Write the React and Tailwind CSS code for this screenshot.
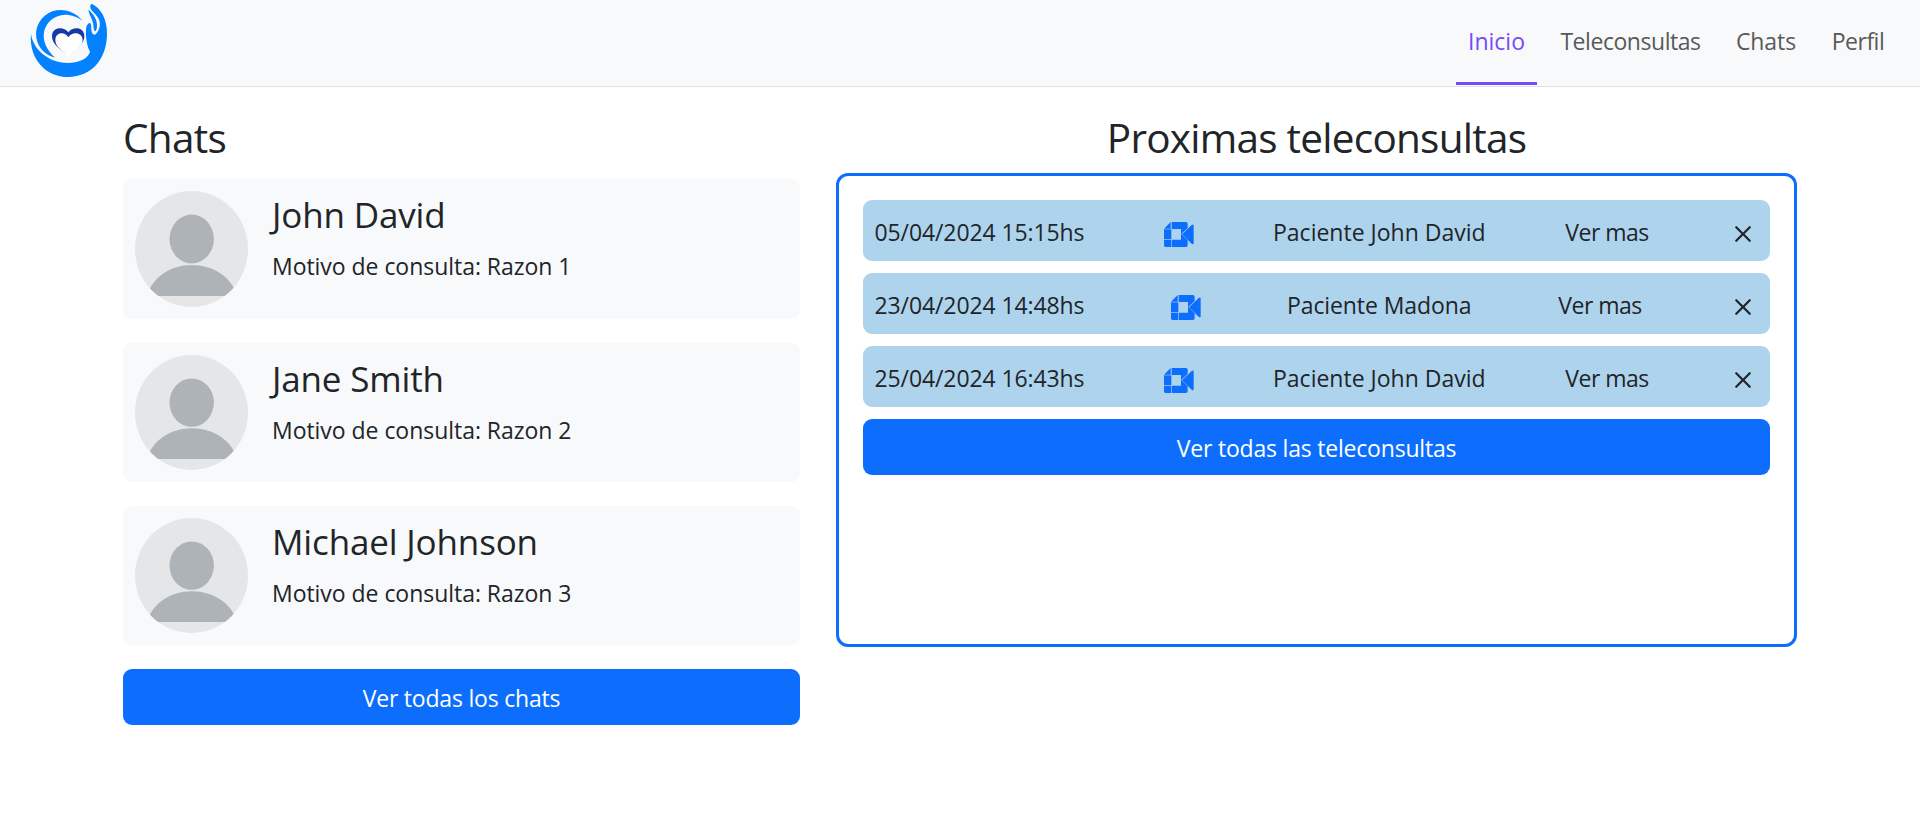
const NAV = [
  { label: 'Inicio', active: true, size: 'w-[81px]' },
  { label: 'Teleconsultas', size: 'w-[163px] tracking-[-0.45px]' },
  { label: 'Chats', size: 'w-[84px] tracking-[-0.1px]' },
  { label: 'Perfil', size: 'w-[76px] tracking-[-0.5px]' },
]

const CHATS = [
  { name: 'John David', reason: 'Razon 1', size: 'h-[140px]' },
  { name: 'Jane Smith', reason: 'Razon 2', size: 'h-[139px]' },
  { name: 'Michael Johnson', reason: 'Razon 3', size: 'h-[139px]' },
]

const CALLS = [
  { date: '05/04/2024 15:15hs', patient: 'John David', size: 'w-[213px]' },
  { date: '23/04/2024 14:48hs', patient: 'Madona', size: 'w-[185px] tracking-[-0.1px]' },
  { date: '25/04/2024 16:43hs', patient: 'John David', size: 'w-[213px]' },
]

function Logo() {
  return (
    <svg viewBox="0 0 300 240" className="h-20 w-[100px]">
      <g fill="#0381ff">
        <path d="M187 62C168 36 130 22 97 34C62 47 44 82 49 113C54 145 77 165 105 173C82 152 67 124 72 96C78 66 104 45 135 44C156 44 173 51 187 62Z" />
        <path d="M215 11C243 24 262 58 261 103C260 178 214 231 145 231C79 231 26 178 33 101C38 146 84 188 143 189C176 188 204 177 210 155C201 140 197 113 198 91C198 79 203 69 210 69C215 71 213 85 215 95C217 102 222 105 227 103C238 92 242 76 238 61C233 47 222 40 214 30C209 22 210 14 215 11Z" />
        <path d="M205 29C221 41 232 60 231 78C231 86 229 91 226 94C219 91 222 80 219 69C216 54 208 46 205 29Z" />
      </g>
      <path fill="#163aa4" d="M145 166C122 149 95 132 96 108C96 82 130 77 145 97C160 77 193 82 193 108C194 132 168 149 145 166Z" />
      <path fill="#fff" d="M145 170C128 151 106 141 106 120C106 96 134 93 145 112C156 93 188 96 188 120C188 141 162 151 145 170Z" />
    </svg>
  )
}

function Avatar() {
  return (
    <div className="w-[113px] shrink-0 overflow-hidden rounded-[50%] bg-[#e4e6e8]">
      <svg viewBox="0 0 113 116" preserveAspectRatio="none" className="h-full w-full">
        <ellipse cx="56.7" cy="48" rx="22.2" ry="24.4" fill="#adb3b7" />
        <path fill="#adb3b7" d="M12 105C17 86 36 74 56.7 74C78 74 97 86 102 105Z" />
      </svg>
    </div>
  )
}

function MeetIcon() {
  return (
    <svg viewBox="0 0 90 75" className="mt-[10px] h-[25px] w-[30px] shrink-0" fill="#0d6efd">
      <path d="M0 20L20 0V20Z" />
      <path d="M0 22H22V52H0Z" />
      <path d="M0 54H21V75H5Q0 75 0 70Z" />
      <path d="M23 0H66Q71 0 71 5V18L52 36L71 55V70Q71 75 66 75H23V53H51V21H23Z" />
      <path d="M54 37L83 9Q89 5 89 12V63Q89 70 83 65Z" />
    </svg>
  )
}

function CloseIcon() {
  return (
    <svg viewBox="0 0 16 16" className="-mr-[2px] -ml-[4px] mt-1 h-9 w-9 shrink-0" fill="#212529">
      <path d="M4.646 4.646a.5.5 0 0 1 .708 0L8 7.293l2.646-2.647a.5.5 0 0 1 .708.708L8.707 8l2.647 2.646a.5.5 0 0 1-.708.708L8 8.707l-2.646 2.647a.5.5 0 0 1-.708-.708L7.293 8 4.646 5.354a.5.5 0 0 1 0-.708" />
    </svg>
  )
}

export default function App() {
  return (
    <div className="min-h-[834px] bg-white font-['Open_Sans','Noto_Sans',sans-serif] text-[23px] leading-9 text-[#212529]">
      <header className="flex h-[87px] items-start justify-between border-b border-[#dee2e6] bg-[#f8f9fb] pr-6 pl-5">
        <Logo />
        <nav className="flex gap-3">
          {NAV.map((n) => (
            <a
              key={n.label}
              className={`h-[85px] border-b-3 pt-[23px] text-center whitespace-nowrap ${n.size} ${
                n.active ? 'border-[#794af9] text-[#794af9]' : 'border-transparent text-[#595959]'
              }`}
            >
              {n.label}
            </a>
          ))}
        </nav>
      </header>

      <main className="flex gap-9 px-[123px] pt-6">
        <section className="w-[677px]">
          <h1 className="h-[50px] text-[40.5px] leading-[54px] tracking-[-0.7px]">Chats</h1>
          <div className="mt-[18px] flex flex-col gap-6">
            {CHATS.map((c) => (
              <article key={c.name} className={`flex gap-6 rounded-[9px] bg-[#f8f9fb] p-3 ${c.size}`}>
                <Avatar />
                <div className="pt-[2px]">
                  <h2 className="text-[35px] leading-[43px] tracking-[-0.15px]">{c.name}</h2>
                  <p className="mt-3 tracking-[-0.04px]">Motivo de consulta: {c.reason}</p>
                </div>
              </article>
            ))}
            <button className="h-14 rounded-[9px] bg-[#0d6efd] pt-[2px] tracking-[-0.2px] text-white">
              Ver todas los chats
            </button>
          </div>
        </section>

        <section className="w-[961px]">
          <h1 className="h-[50px] text-center text-[40.5px] leading-[54px] tracking-[-0.75px]">Proximas teleconsultas</h1>
          <div className="mt-3 flex h-[474px] flex-col gap-3 rounded-xl border-3 border-[#0d6efd] p-6">
            {CALLS.map((c) => (
              <div
                key={c.date}
                className="flex h-[61px] shrink-0 items-start justify-between rounded-[9px] bg-[#aed4ed] px-[11.5px] pt-3 whitespace-nowrap"
              >
                <span className="w-[210px] pt-[2px] tracking-[-0.1px]">{c.date}</span>
                <MeetIcon />
                <span className={`pt-[2px] ${c.size}`}>Paciente {c.patient}</span>
                <span className="w-[84px] pt-[2px] tracking-[-0.5px]">Ver mas</span>
                <CloseIcon />
              </div>
            ))}
            <button className="h-14 shrink-0 rounded-[9px] bg-[#0d6efd] pt-[2px] tracking-[-0.2px] text-white">
              Ver todas las teleconsultas
            </button>
          </div>
        </section>
      </main>
    </div>
  )
}
